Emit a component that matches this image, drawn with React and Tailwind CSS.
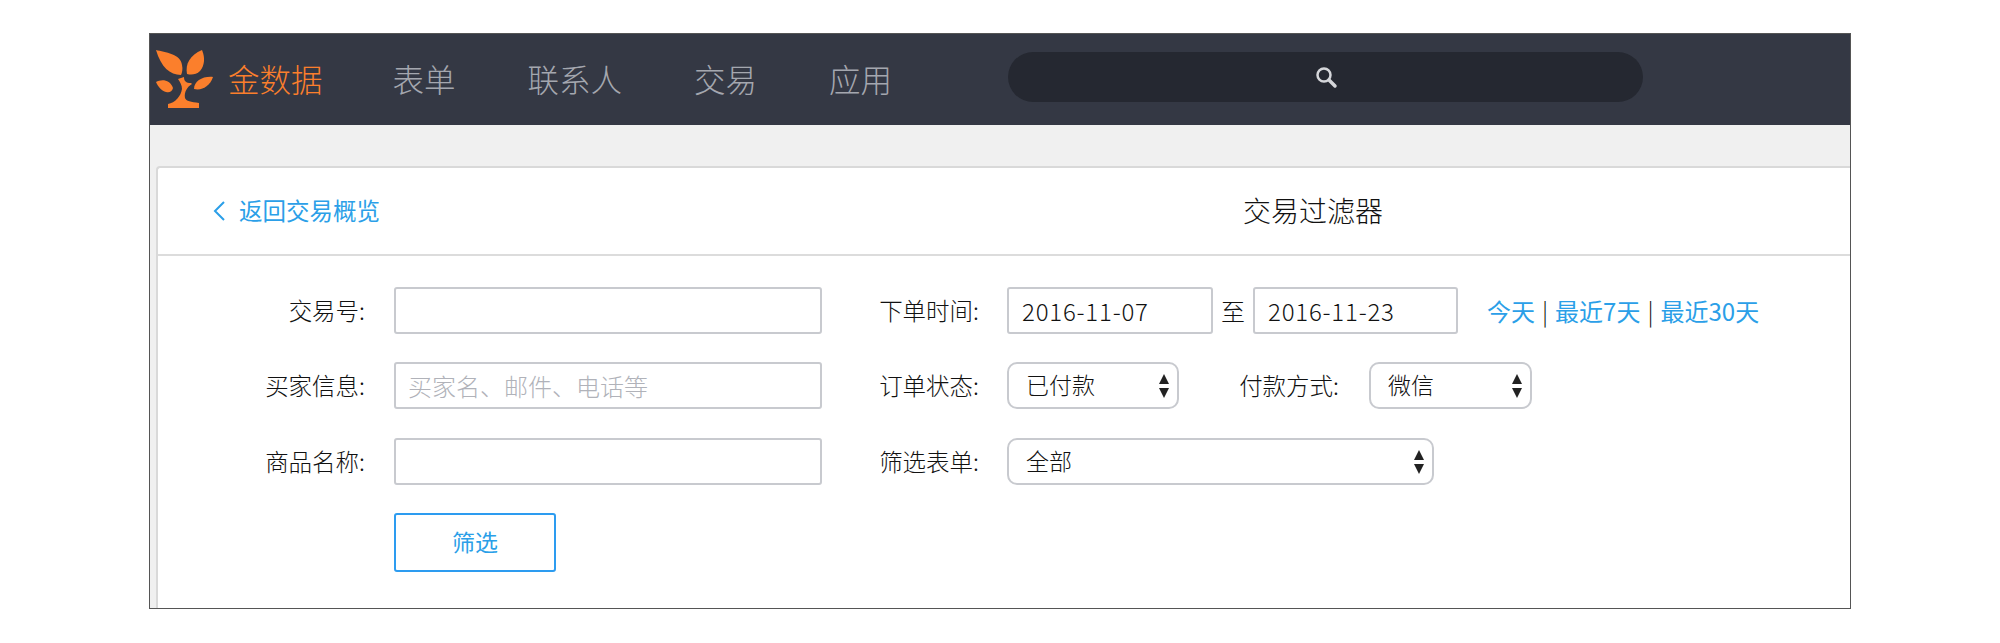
import React from 'react';

const CJK = "font-['Noto_Sans_CJK_SC','Noto_Sans',sans-serif]";
const inputCls = 'h-[47px] border-2 border-[#c8cacf] rounded-[3px] bg-white text-[24px] text-[#111] outline-none';

function Logo() {
  return (
    <svg width="60" height="60" viewBox="0 0 60 60" fill="#fb7f2c" className="shrink-0">
      <path d="M1 1C10 3 26 5 27 16C28 20 27 24 26 26C15 26 6 18 1 1Z" />
      <path d="M47 1C50 8 50 16 45 22C41 26 36 26 32 25C30 15 35 6 47 1Z" />
      <path d="M58 28C55 37 47 42 39 40C39 32 48 27 58 28Z" />
      <path d="M1 33C6 30 15 30 18 39C17 43 14 44 11 43C7 42 3 38 1 33Z" />
      <path d="M23 30L29 28C29 32 31 34 36 34L37 35C32 38 29 43 30 49C31 52 36 53 44 54L44 59L13 59L13 55C20 54 26 47 27 40C27 36 25 33 23 30Z" />
    </svg>
  );
}

function Label({ width, children }) {
  return <label className="text-right text-[23.5px] text-[#111] font-light shrink-0" style={{ width }}>{children}</label>;
}

function Select({ width, value }) {
  return (
    <div className="relative shrink-0" style={{ width }}>
      <select
        defaultValue={value}
        className={`${CJK} w-full h-[47px] appearance-none border-2 border-[#c8cacf] rounded-[10px] bg-white pl-[17px] pb-[2px] text-[23px] text-[#111] font-light outline-none`}
      >
        <option>{value}</option>
      </select>
      <svg width="12" height="28" viewBox="0 0 12 28" fill="#222" className="absolute right-[9px] top-[10px] pointer-events-none">
        <path d="M6 2L11 12H1Z" />
        <path d="M1 16H11L6 26Z" />
      </svg>
    </div>
  );
}

export default function App() {
  return (
    <div className={`${CJK} bg-white h-[643px] pt-[33px] pl-[149px] overflow-hidden`}>
      <div className="w-[1702px] h-[576px] border border-[#555] bg-[#f0f0f0] overflow-hidden">
        {/* Top nav */}
        <div className="h-[91px] bg-[#343844] flex items-center">
          <div className="ml-[5px] mb-[2px] flex items-center">
            <Logo />
            <span className="ml-[13px] text-[31.5px] text-[#fb7f2c] font-light">金数据</span>
          </div>
          <nav className="ml-[70px] mb-[2px] flex items-center gap-[72px] text-[31.5px] text-[#a4a7af] font-light">
            <span>表单</span>
            <span>联系人</span>
            <span>交易</span>
            <span>应用</span>
          </nav>
          <div className="ml-[116px] mb-[6px] w-[635px] h-[50px] rounded-[25px] bg-[#252831] flex items-center justify-center">
            <svg width="24" height="24" viewBox="0 0 24 24" fill="none" stroke="#d5d6da">
              <circle cx="10" cy="10" r="6.5" strokeWidth="2.5" />
              <path d="M15 15L21 21" strokeWidth="3.5" strokeLinecap="round" />
            </svg>
          </div>
        </div>

        {/* Card */}
        <div className="mt-[41px] ml-[6px] h-[443px] bg-white border-t-2 border-l-2 border-[#d9d9d9] rounded-tl-[4px]">
          <div className="h-[88px] border-b-2 border-[#dcdcdc] flex items-center pl-[54px]">
            <a className="w-[1031px] flex items-center text-[23.5px] text-[#2b9fe8]">
              <svg width="14" height="22" viewBox="0 0 14 22" fill="none" stroke="#2b9fe8" strokeWidth="2" className="mr-[13px]">
                <path d="M12 2L3 11L12 20" />
              </svg>
              返回交易概览
            </a>
            <h1 className="mb-[2px] text-[28px] text-[#111] font-light">交易过滤器</h1>
          </div>

          <div className="flex flex-col">
            <div className="mt-[31px] flex items-center">
              <Label width={207}>交易号:</Label>
              <input readOnly className={`${inputCls} ${CJK} ml-[29px] w-[428px] px-[12px]`} />
              <Label width={157}>下单时间:</Label>
              <input readOnly value="2016-11-07" className={`${inputCls} ${CJK} ml-[28px] w-[206px] pl-[13px] font-light tracking-[0.8px]`} />
              <span className="w-[40px] text-center text-[24px] text-[#111] font-light">至</span>
              <input readOnly value="2016-11-23" className={`${inputCls} ${CJK} w-[205px] pl-[13px] font-light tracking-[0.8px]`} />
              <div className="ml-[29px] text-[24px] text-[#2b9fe8] whitespace-nowrap">
                <a>今天</a>
                <span className="text-[#111] mx-[7px] font-light">|</span>
                <a>最近7天</a>
                <span className="text-[#111] mx-[7px] font-light">|</span>
                <a>最近30天</a>
              </div>
            </div>

            <div className="mt-[28px] flex items-center">
              <Label width={207}>买家信息:</Label>
              <input
                readOnly
                placeholder="买家名、邮件、电话等"
                className={`${inputCls} ${CJK} ml-[29px] w-[428px] px-[12px] font-light placeholder:text-[#b0b2b9]`}
              />
              <Label width={157}>订单状态:</Label>
              <div className="ml-[28px]"><Select width={172} value="已付款" /></div>
              <Label width={160}>付款方式:</Label>
              <div className="ml-[30px]"><Select width={163} value="微信" /></div>
            </div>

            <div className="mt-[29px] flex items-center">
              <Label width={207}>商品名称:</Label>
              <input readOnly className={`${inputCls} ${CJK} ml-[29px] w-[428px] px-[12px]`} />
              <Label width={157}>筛选表单:</Label>
              <div className="ml-[28px]"><Select width={427} value="全部" /></div>
            </div>

            <button className={`${CJK} mt-[28px] ml-[236px] w-[162px] h-[59px] border-2 border-[#2d9cf0] rounded-[3px] pb-[2px] text-[23px] text-[#2b9fe8]`}>
              筛选
            </button>
          </div>
        </div>
      </div>
    </div>
  );
}
